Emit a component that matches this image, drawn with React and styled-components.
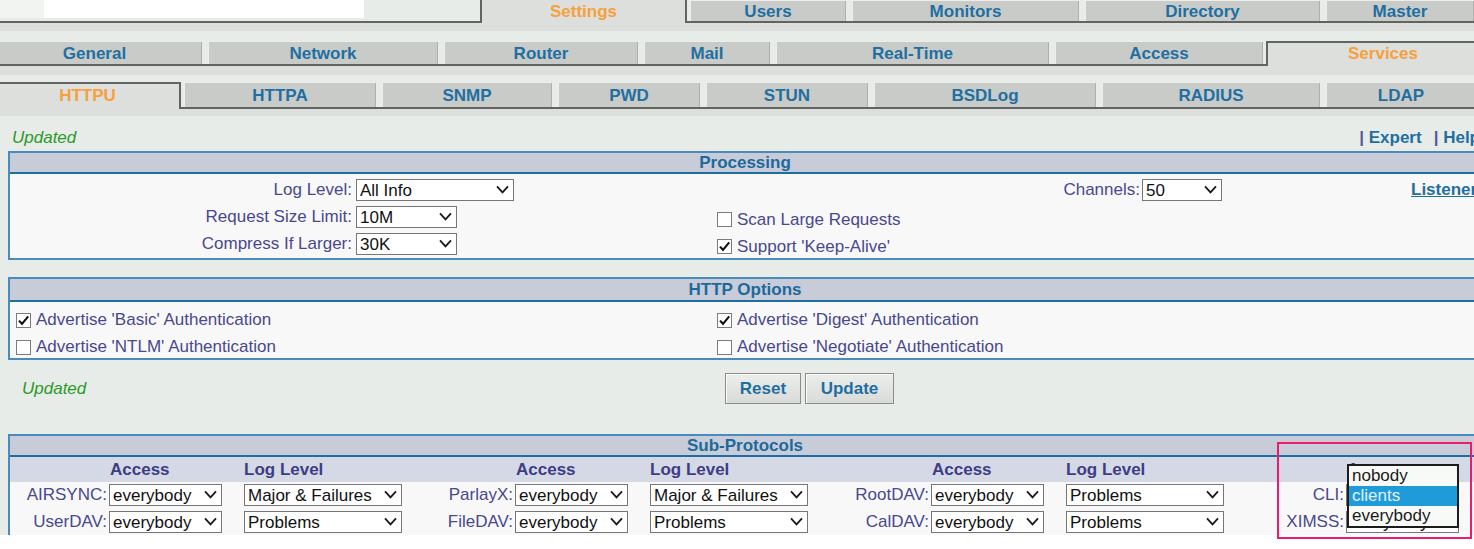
import styled, { createGlobalStyle, css } from 'styled-components';

const GlobalStyle = createGlobalStyle`
  html, body {
    margin: 0;
    padding: 0;
    background: #fff;
    overflow: hidden;
  }
  body {
    font-family: "Liberation Sans", Arial, sans-serif;
    font-size: 17px;
  }
  *, *::before, *::after {
    box-sizing: border-box;
  }
`;

const tabRows = [
    {
        height: 23, strip: 8, gap: 0,
        tabs: [
            { spacer: true, w: 480 },
            { label: 'Settings', w: 207, active: true, noTop: true },
            { label: 'Users', w: 162 },
            { label: 'Monitors', w: 233 },
            { label: 'Directory', w: 241 },
            { label: 'Master', w: 154 },
        ],
    },
    {
        height: 25, strip: 9, gap: 10,
        tabs: [
            { label: 'General', w: 221, shift: -16 },
            { label: 'Network', w: 236 },
            { label: 'Router', w: 200 },
            { label: 'Mail', w: 132 },
            { label: 'Real-Time', w: 279 },
            { label: 'Access', w: 214 },
            { label: 'Services', w: 234, active: true },
        ],
    },
    {
        height: 27, strip: 7, gap: 7,
        tabs: [
            { label: 'HTTPU', w: 187, shift: -6, active: true },
            { label: 'HTTPA', w: 198 },
            { label: 'SNMP', w: 176 },
            { label: 'PWD', w: 148 },
            { label: 'STUN', w: 168 },
            { label: 'BSDLog', w: 228 },
            { label: 'RADIUS', w: 224 },
            { label: 'LDAP', w: 156 },
        ],
    },
];

const accessOpts = [ 'nobody', 'clients', 'everybody' ];
const logOpts = [ 'Nothing', 'Major & Failures', 'Problems', 'Low Level', 'All Info' ];

const subRows = [
    [
        { name: 'AIRSYNC', access: 'everybody', log: 'Major & Failures' },
        { name: 'ParlayX', access: 'everybody', log: 'Major & Failures' },
        { name: 'RootDAV', access: 'everybody', log: 'Problems' },
        { name: 'CLI', access: 'clients', log: 'Problems', open: true },
    ],
    [
        { name: 'UserDAV', access: 'everybody', log: 'Problems' },
        { name: 'FileDAV', access: 'everybody', log: 'Problems' },
        { name: 'CalDAV', access: 'everybody', log: 'Problems' },
        { name: 'XIMSS', access: 'everybody', log: 'Problems' },
    ],
];

function Chevron(){
    return(
        <ChevronIcon viewBox="0 0 13 9">
            <path d="M1 1.3 L6.5 7.4 L12 1.3" fill="none" stroke="#1a1a1a" strokeWidth="1.8" />
        </ChevronIcon>
    );
}

function Select({ w, value, options, ml, children }){
    return(
        <SelectWrap $w={ w } $ml={ ml }>
            <SelectEl defaultValue={ value }>
                { options.map((o)=>(
                    <option key={ o } value={ o }>{ o }</option>
                )) }
            </SelectEl>
            <Chevron />
            { children }
        </SelectWrap>
    );
}

function Check({ on, children }){
    return(
        <CheckLabel>
            <CheckBox>
                { on && (
                    <svg width="13" height="13" viewBox="0 0 13 13">
                        <path d="M2 6.6 L5 9.8 L11.2 2.4" fill="none" stroke="#111" strokeWidth="2.1" />
                    </svg>
                ) }
            </CheckBox>
            { children }
        </CheckLabel>
    );
}

export default function App(){
    return(
        <Frame>
            <GlobalStyle />
            <Page>
                { tabRows.map((row, i)=>(
                    <div key={ i }>
                        <TabRow $h={ row.height } $gap={ row.gap }>
                            { row.tabs.map((t, j)=>{
                                if(t.spacer){
                                    return(
                                        <Spacer key={ j } $w={ t.w }>
                                            <FieldEdge />
                                            <Field />
                                        </Spacer>
                                    );
                                }
                                if(t.active){
                                    return(
                                        <ActiveTab key={ j } $w={ t.w } $shift={ t.shift } $noTop={ t.noTop }>
                                            { t.label }
                                        </ActiveTab>
                                    );
                                }
                                return(
                                    <TabCell key={ j } $w={ t.w } $shift={ t.shift }>
                                        <TabFace>{ t.label }</TabFace>
                                    </TabCell>
                                );
                            }) }
                        </TabRow>
                        <Strip $h={ row.strip } />
                    </div>
                )) }

                <TopBar>
                    <Note>Updated</Note>
                    <Links>
                        <Bar>|</Bar> <LinkText>Expert</LinkText>
                        <Bar $ml={ 12 }>|</Bar> <LinkText>Help</LinkText>
                    </Links>
                </TopBar>

                <Panel>
                    <PanelHead $h={ 19 }>Processing</PanelHead>
                    <ProcGrid>
                        <Label $pr={ 4 }>Log Level:</Label>
                        <Cell><Select w={ 158 } ml={ 0 } value="All Info" options={ logOpts } /></Cell>
                        <Cell />
                        <Label $pr={ 1 }>Channels:</Label>
                        <Cell><Select w={ 80 } value="50" options={ [ '10', '20', '50', '100' ] } /></Cell>
                        <Cell $pl={ 6 }><UnderLink>Listener</UnderLink></Cell>

                        <Label $pr={ 4 }>Request Size Limit:</Label>
                        <Cell><Select w={ 101 } ml={ 0 } value="10M" options={ [ '1M', '10M', '100M' ] } /></Cell>
                        <Cell $span $pl={ 1 }><Check>Scan Large Requests</Check></Cell>

                        <Label $pr={ 4 }>Compress If Larger:</Label>
                        <Cell><Select w={ 101 } ml={ 0 } value="30K" options={ [ '10K', '30K', '100K' ] } /></Cell>
                        <Cell $span $pl={ 1 }><Check on>Support 'Keep-Alive'</Check></Cell>
                    </ProcGrid>
                </Panel>

                <Panel $mt={ 17 }>
                    <PanelHead $h={ 21 }>HTTP Options</PanelHead>
                    <OptGrid>
                        <Cell $pl={ 6 }><Check on>Advertise 'Basic' Authentication</Check></Cell>
                        <Cell $pl={ 1 }><Check on>Advertise 'Digest' Authentication</Check></Cell>
                        <Cell $pl={ 6 }><Check>Advertise 'NTLM' Authentication</Check></Cell>
                        <Cell $pl={ 1 }><Check>Advertise 'Negotiate' Authentication</Check></Cell>
                    </OptGrid>
                </Panel>

                <Actions>
                    <ActionNote>Updated</ActionNote>
                    <Button $w={ 76 }>Reset</Button>
                    <Button $w={ 89 }>Update</Button>
                </Actions>

                <Panel $mt={ 30 }>
                    <PanelHead $h={ 19 }>Sub-Protocols</PanelHead>
                    <ColHeads>
                        { [ 0, 1, 2, 3 ].map((g)=>(
                            <Group key={ g }>
                                <span />
                                <ColHead $pl={ 2 }>Access</ColHead>
                                <ColHead $pl={ 1 }>{ g < 3 ? 'Log Level' : '' }</ColHead>
                            </Group>
                        )) }
                    </ColHeads>
                    <SubBody>
                        { subRows.map((row, i)=>(
                            <SubGrid key={ i }>
                                { row.map((p)=>(
                                    <Group key={ p.name }>
                                        <Label $pr={ 1 }>{ p.name }:</Label>
                                        <Cell>
                                            <Select w={ 113 } value={ p.access } options={ accessOpts }>
                                                { p.open && (
                                                    <Popup>
                                                        { accessOpts.map((o)=>(
                                                            <PopItem key={ o } $on={ o === p.access }>{ o }</PopItem>
                                                        )) }
                                                    </Popup>
                                                ) }
                                            </Select>
                                        </Cell>
                                        <Cell><Select w={ 158 } value={ p.log } options={ logOpts } /></Cell>
                                    </Group>
                                )) }
                            </SubGrid>
                        )) }
                    </SubBody>
                </Panel>
            </Page>
            <Marker />
        </Frame>
    );
}

const tabBlue = '#1f6fa2';
const labelColor = '#48488e';
const lineGray = '#616561';

const Frame = styled.div`
    position: relative;
    width: 1474px;
    height: 549px;
    overflow: hidden;
`;

const Page = styled.div`
    width: 1490px;
    height: 535px;
    overflow: hidden;
    background: #e8ece8;
`;

const TabRow = styled.div`
    display: flex;
    height: ${ ({ $h })=>$h }px;
    margin-top: ${ ({ $gap })=>$gap }px;
`;

const Spacer = styled.div`
    flex: 0 0 ${ ({ $w })=>$w }px;
    display: flex;
    align-items: flex-start;
    border-bottom: 2px solid ${ lineGray };
`;

const FieldEdge = styled.div`
    width: 44px;
    height: 18px;
    background: #f2f4f2;
`;

const Field = styled.div`
    width: 320px;
    height: 18px;
    background: #fff;
`;

const TabCell = styled.div`
    flex: 0 0 ${ ({ $w })=>$w }px;
    margin-left: ${ ({ $shift })=>$shift || 0 }px;
    display: flex;
    padding: 0 3px;
    border-bottom: 2px solid ${ lineGray };
`;

const TabFace = styled.div`
    flex: 1;
    display: flex;
    align-items: center;
    justify-content: center;
    padding-top: 2px;
    background: #c8cbc8;
    box-shadow: inset 1px 1px 0 #eceeec, inset -1px 0 0 #adb0ad;
    color: ${ tabBlue };
    font-weight: bold;
    white-space: nowrap;
`;

const ActiveTab = styled.div`
    flex: 0 0 ${ ({ $w })=>$w }px;
    margin-left: ${ ({ $shift })=>$shift || 0 }px;
    display: flex;
    align-items: center;
    justify-content: center;
    padding-bottom: ${ ({ $noTop })=>$noTop ? 0 : 2 }px;
    background: #dcdfdc;
    border: 2px solid ${ lineGray };
    border-bottom: none;
    ${ ({ $noTop })=>$noTop && css`border-top: none;` }
    color: #f7a03c;
    font-weight: bold;
    white-space: nowrap;
`;

const Strip = styled.div`
    height: ${ ({ $h })=>$h }px;
    background: #dcdfdc;
`;

const TopBar = styled.div`
    display: flex;
    justify-content: space-between;
    align-items: center;
    height: 35px;
    padding: 12px 10px 3px 12px;
    line-height: 20px;
`;

const Note = styled.span`
    color: #2a9a2a;
    font-style: italic;
`;

const Links = styled.div`
    white-space: pre;
    font-weight: bold;
`;

const Bar = styled.span`
    color: #57579c;
    margin-left: ${ ({ $ml })=>$ml || 0 }px;
`;

const LinkText = styled.span`
    color: ${ tabBlue };
`;

const UnderLink = styled.a`
    color: ${ tabBlue };
    font-weight: bold;
    text-decoration: underline;
    white-space: nowrap;
`;

const Panel = styled.section`
    margin: ${ ({ $mt })=>$mt || 0 }px 8px 0;
    border: 2px solid #4a8bbd;
    background: #f8f8f8;
`;

const PanelHead = styled.div`
    height: ${ ({ $h })=>$h + 2 }px;
    line-height: ${ ({ $h })=>$h }px;
    background: #c8ccd8;
    border-bottom: 2px solid #1f6ea3;
    text-align: center;
    color: #1c6a9c;
    font-weight: bold;
`;

const ProcGrid = styled.div`
    display: grid;
    grid-template-columns: 346px 360px 284px 141px 264px 1fr;
    grid-auto-rows: 22px;
    row-gap: 5px;
    align-items: center;
    padding: 5px 0 3px;
`;

const OptGrid = styled.div`
    display: grid;
    grid-template-columns: 706px 1fr;
    grid-auto-rows: 22px;
    row-gap: 5px;
    align-items: center;
    padding: 7px 0 0;
`;

const Label = styled.div`
    text-align: right;
    padding-right: ${ ({ $pr })=>$pr }px;
    color: ${ labelColor };
    white-space: nowrap;
`;

const Cell = styled.div`
    display: flex;
    align-items: center;
    padding-left: ${ ({ $pl })=>$pl || 0 }px;
    ${ ({ $span })=>$span && css`
        grid-column: 3 / -1;
        padding-top: 5px;
    ` }
`;

const SelectWrap = styled.span`
    position: relative;
    display: inline-block;
    flex: 0 0 auto;
    width: ${ ({ $w })=>$w }px;
    height: 22px;
    margin-left: ${ ({ $ml })=>$ml ?? 1 }px;
`;

const SelectEl = styled.select`
    appearance: none;
    display: block;
    width: 100%;
    height: 100%;
    margin: 0;
    padding: 0 20px 0 3px;
    border: 1px solid #767676;
    border-radius: 0;
    background: #fff;
    color: #111;
    font: 17px "Liberation Sans", Arial, sans-serif;
    outline: none;
`;

const ChevronIcon = styled.svg`
    position: absolute;
    right: 5px;
    top: 6px;
    width: 13px;
    height: 9px;
    pointer-events: none;
`;

const CheckLabel = styled.label`
    display: inline-flex;
    align-items: center;
    color: ${ labelColor };
    white-space: nowrap;
`;

const CheckBox = styled.span`
    flex: 0 0 15px;
    width: 15px;
    height: 15px;
    margin-right: 5px;
    display: inline-flex;
    align-items: center;
    justify-content: center;
    border: 1px solid #7c7c7c;
    background: #fff;
`;

const Actions = styled.div`
    display: flex;
    align-items: center;
    height: 31px;
    margin: 13px 8px 0;
`;

const ActionNote = styled(Note)`
    width: 717px;
    padding-left: 14px;
`;

const Button = styled.button`
    width: ${ ({ $w })=>$w }px;
    height: 31px;
    margin: 0 4px 0 0;
    padding: 0;
    border: 1px solid #8c8c8c;
    box-shadow: inset 1px 1px 0 #fbfbfb;
    background: linear-gradient(#eceeec, #d9dbd9);
    color: ${ tabBlue };
    font: bold 17px "Liberation Sans", Arial, sans-serif;
`;

const subCols = '98px 135px 178px 93px 135px 188px 93px 135px 187px 93px 135px 200px';

const ColHeads = styled.div`
    display: grid;
    grid-template-columns: ${ subCols };
    height: 25px;
    align-items: center;
    background: #d5d9e5;
`;

const Group = styled.div`
    display: contents;
`;

const ColHead = styled.div`
    padding-left: ${ ({ $pl })=>$pl }px;
    color: #3d3d86;
    font-weight: bold;
    white-space: nowrap;
`;

const SubBody = styled.div`
    display: flex;
    flex-direction: column;
    gap: 5px;
    padding: 2px 0 4px;
`;

const SubGrid = styled.div`
    display: grid;
    grid-template-columns: ${ subCols };
    height: 22px;
    align-items: center;
`;

const Popup = styled.div`
    position: absolute;
    top: -20px;
    left: 1px;
    width: 112px;
    z-index: 5;
    border: 2px solid #1c1c1c;
    background: #f8faf8;
`;

const PopItem = styled.div`
    height: 20px;
    line-height: 20px;
    padding-left: 3px;
    color: ${ ({ $on })=>$on ? '#e2f2fc' : '#1a1a1a' };
    background: ${ ({ $on })=>$on ? '#1e9bd8' : 'transparent' };
`;

const Marker = styled.div`
    position: absolute;
    left: 1277px;
    top: 442px;
    width: 195px;
    height: 97px;
    border: 2px solid #ef1a6e;
    z-index: 10;
    pointer-events: none;
`;
